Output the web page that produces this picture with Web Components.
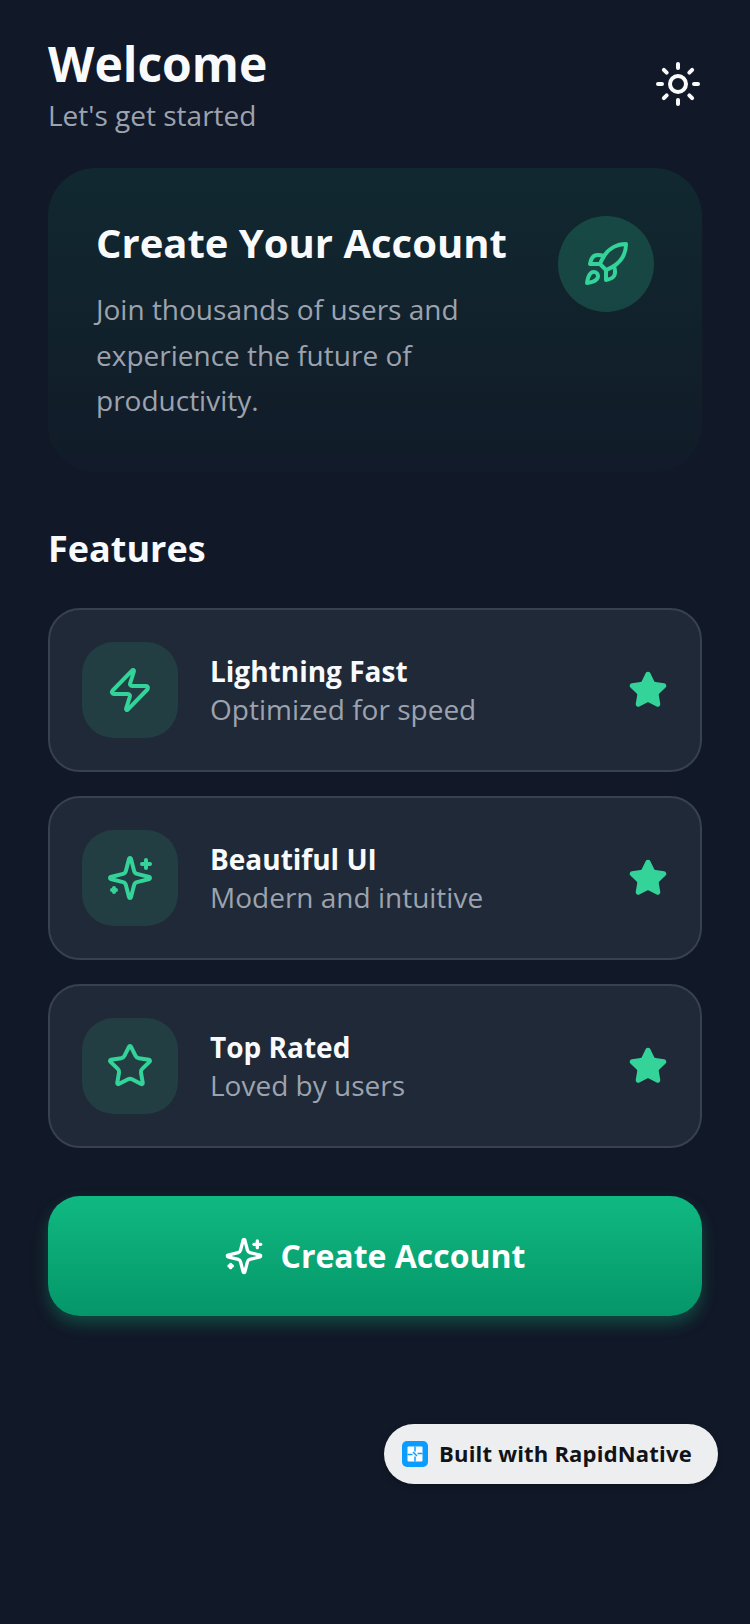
<!DOCTYPE html>
<html lang="en">
<head>
<meta charset="utf-8">
<title>Welcome</title>
<style>
	html, body {
		margin: 0;
		padding: 0;
		background: #111827;
	}
	body {
		font-family: "Open Sans", "Liberation Sans", sans-serif;
		width: 750px;
		height: 1624px;
		overflow: hidden;
	}
</style>
</head>
<body>
<app-screen>
	<app-header title="Welcome" subtitle="Let's get started"></app-header>
	<hero-card heading="Create Your Account">Join thousands of users and experience the future of productivity.</hero-card>
	<feature-list heading="Features">
		<feature-row icon="zap" heading="Lightning Fast" detail="Optimized for speed"></feature-row>
		<feature-row icon="sparkles" heading="Beautiful UI" detail="Modern and intuitive"></feature-row>
		<feature-row icon="star" heading="Top Rated" detail="Loved by users"></feature-row>
	</feature-list>
	<cta-button>Create Account</cta-button>
	<built-badge>Built with RapidNative</built-badge>
</app-screen>
<script>
const icons = {
	sun: `<circle cx="12" cy="12" r="4"/><path d="M12 2v2"/><path d="M12 20v2"/><path d="m4.93 4.93 1.41 1.41"/><path d="m17.66 17.66 1.41 1.41"/><path d="M2 12h2"/><path d="M20 12h2"/><path d="m6.34 17.66-1.41 1.41"/><path d="m19.07 4.93-1.41 1.41"/>`,
	rocket: `<path d="M4.5 16.5c-1.5 1.26-2 5-2 5s3.74-.5 5-2c.71-.84.7-2.13-.09-2.91a2.18 2.18 0 0 0-2.91-.09z"/><path d="m12 15-3-3a22 22 0 0 1 2-3.95A12.88 12.88 0 0 1 22 2c0 2.72-.78 7.5-6 11a22.35 22.35 0 0 1-4 2z"/><path d="M9 12H4s.55-3.03 2-4c1.62-1.08 5 0 5 0"/><path d="M12 15v5s3.03-.55 4-2c1.08-1.62 0-5 0-5"/>`,
	zap: `<path d="M4 14a1 1 0 0 1-.78-1.63l9.9-10.2a.5.5 0 0 1 .86.46l-1.92 6.02A1 1 0 0 0 13 10h7a1 1 0 0 1 .78 1.63l-9.9 10.2a.5.5 0 0 1-.86-.46l1.92-6.02A1 1 0 0 0 11 14z"/>`,
	sparkles: `<path d="M9.937 15.5A2 2 0 0 0 8.5 14.063l-6.135-1.582a.5.5 0 0 1 0-.962L8.5 9.936A2 2 0 0 0 9.937 8.5l1.582-6.135a.5.5 0 0 1 .963 0L14.063 8.5A2 2 0 0 0 15.5 9.937l6.135 1.581a.5.5 0 0 1 0 .964L15.5 14.063a2 2 0 0 0-1.437 1.437l-1.582 6.135a.5.5 0 0 1-.963 0z"/><path d="M20 3v4"/><path d="M22 5h-4"/><path d="M4 17v2"/><path d="M5 18H3"/>`,
	star: `<path d="M11.525 2.295a.53.53 0 0 1 .95 0l2.31 4.679a2.123 2.123 0 0 0 1.595 1.16l5.166.756a.53.53 0 0 1 .294.904l-3.736 3.638a2.123 2.123 0 0 0-.611 1.878l.882 5.14a.53.53 0 0 1-.771.56l-4.618-2.428a2.122 2.122 0 0 0-1.973 0L6.396 21.01a.53.53 0 0 1-.77-.56l.881-5.139a2.122 2.122 0 0 0-.611-1.879L2.16 9.795a.53.53 0 0 1 .294-.906l5.165-.755a2.122 2.122 0 0 0 1.597-1.16z"/>`,
};

const iconSvg = (name, size, color, fill = "none") => `
<svg xmlns="http://www.w3.org/2000/svg" width="${size}" height="${size}" viewBox="0 0 24 24" fill="${fill}" stroke="${color}" stroke-width="2" stroke-linecap="round" stroke-linejoin="round">${icons[name]}</svg>`;

class BaseElement extends HTMLElement {
	constructor() {
		super();
		this.attachShadow({ mode: "open" });
	}
	connectedCallback() {
		this.shadowRoot.innerHTML = this.render();
	}
}

class AppScreen extends BaseElement {
	render() {
		return `
<style>
	:host {
		display: flex;
		flex-direction: column;
		position: relative;
		box-sizing: border-box;
		width: 750px;
		height: 1624px;
		padding: 32px 48px 0;
		background: #111827;
		color: #f9fafb;
	}
</style>
<slot></slot>`;
	}
}

class AppHeader extends BaseElement {
	render() {
		return `
<style>
	:host {
		display: flex;
		justify-content: space-between;
		align-items: center;
	}
	h1 {
		margin: 0;
		font-size: 48px;
		line-height: 64px;
		font-weight: 700;
	}
	p {
		margin: -1px 0 1px;
		font-size: 28px;
		line-height: 40px;
		color: #9ca3af;
	}
	.toggle {
		display: flex;
	}
</style>
<div>
	<h1>${this.getAttribute("title")}</h1>
	<p>${this.getAttribute("subtitle")}</p>
</div>
<div class="toggle">${iconSvg("sun", 48, "#f9fafb")}</div>`;
	}
}

class HeroCard extends BaseElement {
	render() {
		return `
<style>
	:host {
		display: flex;
		justify-content: space-between;
		align-items: flex-start;
		margin-top: 32px;
		padding: 48px;
		border-radius: 48px;
		background: linear-gradient(180deg, rgba(16, 185, 129, 0.1), rgba(16, 185, 129, 0.02));
	}
	.copy {
		width: 420px;
	}
	h2 {
		margin: -1px 0 16px;
		font-size: 40px;
		line-height: 56px;
		font-weight: 700;
		white-space: nowrap;
	}
	p {
		margin: 0;
		font-size: 28px;
		line-height: 45.7px;
		color: #9ca3af;
	}
	.badge {
		display: flex;
		align-items: center;
		justify-content: center;
		width: 96px;
		height: 96px;
		border-radius: 50%;
		background: rgba(52, 211, 153, 0.2);
	}
</style>
<div class="copy">
	<h2>${this.getAttribute("heading")}</h2>
	<p><slot></slot></p>
</div>
<div class="badge">${iconSvg("rocket", 48, "#34d399")}</div>`;
	}
}

class FeatureList extends BaseElement {
	render() {
		return `
<style>
	:host {
		display: flex;
		flex-direction: column;
		margin-top: 53px;
	}
	h3 {
		margin: 0 0 35px;
		font-size: 36px;
		line-height: 48px;
		font-weight: 700;
	}
	.rows {
		display: flex;
		flex-direction: column;
		gap: 24px;
	}
</style>
<h3>${this.getAttribute("heading")}</h3>
<div class="rows"><slot></slot></div>`;
	}
}

class FeatureRow extends BaseElement {
	render() {
		return `
<style>
	:host {
		display: flex;
		align-items: center;
		gap: 32px;
		box-sizing: border-box;
		height: 164px;
		padding: 32px;
		border: 2px solid #374151;
		border-radius: 32px;
		background: #1f2937;
	}
	.tile {
		display: flex;
		align-items: center;
		justify-content: center;
		width: 96px;
		height: 96px;
		border-radius: 32px;
		background: rgba(52, 211, 153, 0.13);
	}
	.text {
		flex: 1;
		padding-top: 2px;
	}
	.name {
		margin: -1px 0 1px;
		font-size: 28px;
		line-height: 36px;
		font-weight: 700;
	}
	.detail {
		font-size: 28px;
		line-height: 38px;
		color: #9ca3af;
	}
	.mark {
		display: flex;
	}
</style>
<div class="tile">${iconSvg(this.getAttribute("icon"), 48, "#34d399")}</div>
<div class="text">
	<div class="name">${this.getAttribute("heading")}</div>
	<div class="detail">${this.getAttribute("detail")}</div>
</div>
<div class="mark">${iconSvg("star", 40, "#34d399", "#34d399")}</div>`;
	}
}

class CtaButton extends BaseElement {
	render() {
		return `
<style>
	:host {
		display: flex;
		align-items: center;
		justify-content: center;
		gap: 16px;
		height: 120px;
		margin-top: 48px;
		border-radius: 32px;
		background: linear-gradient(180deg, #10b981, #059669);
		box-shadow: 0 8px 16px rgba(16, 185, 129, 0.3);
		color: #fff;
		font-size: 32px;
		font-weight: 700;
	}
	svg {
		display: block;
	}
	.label {
		margin-bottom: 2px;
	}
</style>
${iconSvg("sparkles", 40, "#fff")}
<span class="label"><slot></slot></span>`;
	}
}

class BuiltBadge extends BaseElement {
	render() {
		return `
<style>
	:host {
		position: absolute;
		left: 384px;
		top: 1424px;
		display: flex;
		align-items: center;
		gap: 11px;
		box-sizing: border-box;
		width: 334px;
		height: 60px;
		padding: 0 18px;
		border-radius: 30px;
		background: #eceef0;
		box-shadow: 0 2px 6px rgba(0, 0, 0, 0.25);
		color: #111318;
		font-size: 22px;
		font-weight: 700;
		letter-spacing: 0.2px;
		white-space: nowrap;
	}
	.logo {
		display: block;
		flex: none;
	}
	.label {
		margin-bottom: 2px;
	}
</style>
<svg class="logo" width="26" height="26" viewBox="0 0 26 26">
	<rect width="26" height="26" rx="5" fill="#0a9cff"/>
	<rect x="5.5" y="5.5" width="15" height="15" rx="1" fill="#fff"/>
	<path d="M13 5.5v5M5.5 13.5h5M11 11l4 4M15.5 12.5h5M13 15.5v5" stroke="#0a9cff" stroke-width="1.5" fill="none"/>
</svg>
<span class="label"><slot></slot></span>`;
	}
}

customElements.define("app-screen", AppScreen);
customElements.define("app-header", AppHeader);
customElements.define("hero-card", HeroCard);
customElements.define("feature-list", FeatureList);
customElements.define("feature-row", FeatureRow);
customElements.define("cta-button", CtaButton);
customElements.define("built-badge", BuiltBadge);
</script>
</body>
</html>
